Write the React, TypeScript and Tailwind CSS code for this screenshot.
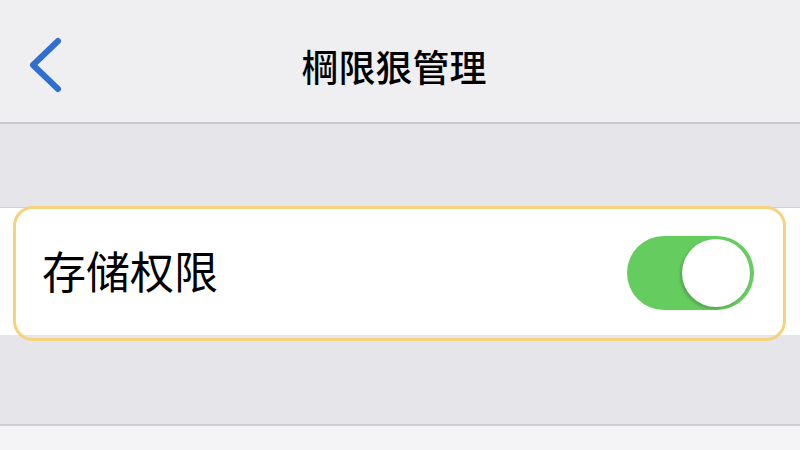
import React from "react";

export default function App() {
  const font = { fontFamily: '"Noto Sans CJK SC", "Noto Sans", sans-serif' };
  return (
    <div className="w-[800px] h-[450px] overflow-hidden flex flex-col bg-[#f4f4f6]" style={font}>
      {/* Nav bar */}
      <div className="h-[124px] shrink-0 relative flex items-center justify-center bg-[#efeff1] border-b-2 border-[#c9c9cd]">
        <div className="absolute left-[26px] top-[37px]">
          <svg width="38" height="56" viewBox="0 0 38 56">
            <path d="M32 4 L7 28 L32 52" fill="none" stroke="#2f6fd0" strokeWidth="6" strokeLinecap="round" strokeLinejoin="round" />
          </svg>
        </div>
        <div className="text-[37px] leading-none text-black font-medium mt-[10px] ml-[-12px]">棡限狠管理</div>
      </div>
      {/* gray gap */}
      <div className="h-[84px] shrink-0 bg-[#e6e5ea] border-b border-[#cfcfd3]" />
      {/* row */}
      <div className="relative h-[127px] shrink-0 bg-white flex items-center justify-between pl-[42px] pr-[46px]">
        <div className="absolute left-[13px] right-[14px] top-[-2px] bottom-[-6px] rounded-[20px] border-[3px] border-[#f6d27e]" />
        <div className="text-[44px] leading-none text-black mt-[-4px]">存储权限</div>
        <div className="w-[127px] h-[74px] rounded-full bg-[#65cc5f] flex items-center justify-end pr-[4px] mt-[2px]">
          <div className="w-[68px] h-[68px] rounded-full bg-white shadow-[-2px_2px_3px_rgba(0,0,0,0.18)]" />
        </div>
      </div>
      {/* gray gap bottom */}
      <div className="h-[91px] shrink-0 bg-[#e6e5ea] border-b-2 border-[#cfcfd3]" />
      <div className="flex-1 bg-[#f4f4f6]" />
    </div>
  );
}
